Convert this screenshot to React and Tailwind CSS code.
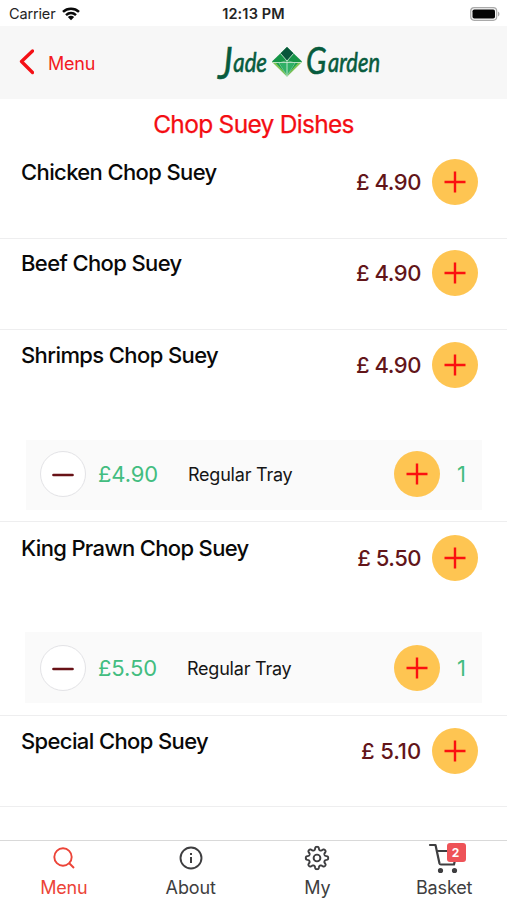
import React from 'react';

const dishes = [
  { name: 'Chicken Chop Suey', price: '4.90', height: 'h-[91px] pt-[11px]', tracking: 'tracking-[-0.62px]', priceTracking: 'tracking-[-0.45px]' },
  { name: 'Beef Chop Suey', price: '4.90', height: 'h-[91px] pt-[11px]', tracking: 'tracking-[-0.62px]', priceTracking: 'tracking-[-0.45px]' },
  { name: 'Shrimps Chop Suey', price: '4.90', height: 'h-[192px] pt-3', tracking: 'tracking-[-0.6px]', priceTracking: 'tracking-[-0.45px]', tray: { name: 'Regular Tray', qty: 1, box: 'mt-[52px] ml-[26px] h-[70px] pb-0.5 pl-[14px]' } },
  { name: 'King Prawn Chop Suey', price: '5.50', height: 'h-[194px] pt-[13px]', tracking: 'tracking-[-0.66px]', priceTracking: 'tracking-[-0.5px]', tray: { name: 'Regular Tray', qty: 1, box: 'mt-[51px] ml-[25px] h-[71px] pt-px pl-[15px]', label: '-ml-px' } },
  { name: 'Special Chop Suey', price: '5.10', height: 'h-[91px] pt-3', tracking: 'tracking-[-0.62px]', priceTracking: 'tracking-[-0.1px]' },
];

const Logo = () => (
  <svg width="176" height="64" viewBox="0 -10 176 64" fill="#075b3d" className="overflow-visible italic">
    <g fontFamily="Lato, sans-serif" fontSize="27" stroke="#075b3d" strokeWidth="0.6">
      <text x="8" y="38" textLength="49" lengthAdjust="spacingAndGlyphs"><tspan fontSize="44">J</tspan><tspan dx="1" dy="-7">ade</tspan></text>
      <text x="96" y="33" textLength="74" lengthAdjust="spacingAndGlyphs"><tspan fontSize="37">G</tspan><tspan dx="2" dy="-2">arden</tspan></text>
    </g>
    <path d="M77 6L62 20.500L77 35.500L92 20.500Z" fill="#159447" />
    <path d="M62 21L77 35.500L92 21L84 22L77 35L70 22Z" fill="#80c455" />
    <path d="M66 22H88L77 34Z" fill="#18a052" />
    <path d="M70 22H84L77 35Z" fill="#2fb066" />
    <path d="M70.500 12.500L77 6L83.500 12.500L77 20Z" fill="#08563b" />
    <path d="M70.500 12.500L77 20L83.500 12.500M63 21.500H91M77 20V35" fill="none" stroke="#d9f0df" strokeWidth="0.8" />
    <path d="M77 19.500L69 22L77 35L85 22Z" fill="none" stroke="#b9e3c4" strokeWidth="0.5" />
  </svg>
);

const AddButton = () => (
  <button className="flex h-[46px] w-[46px] shrink-0 items-center justify-center rounded-full bg-[#fec552]">
    <svg width="22" height="22" viewBox="0 0 22 22" stroke="#fb1010" strokeWidth="2.4">
      <path d="M11 0.500V21.500M0.500 11H21.500" />
    </svg>
  </button>
);

const TrayRow = ({ price, tray }) => (
  <div className={`mr-[25px] flex items-center bg-[#fafafa] ${tray.box}`}>
    <button className="flex h-[46px] w-[46px] shrink-0 items-center justify-center rounded-full border border-[#e3e3e6] bg-white">
      <svg width="22" height="6" viewBox="0 0 22 6" className="translate-y-px">
        <path d="M1.500 3H20.500" stroke="#681217" strokeWidth="2.7" strokeLinecap="round" />
      </svg>
    </button>
    <span className="ml-3 w-[90px] text-[22px] leading-7 tracking-[-0.1px] text-[#42bd80]">£{price}</span>
    <span className={`flex-1 pt-0.5 text-[18px] leading-6 tracking-[-0.22px] text-[#151515] ${tray.label ?? ''}`}>{tray.name}</span>
    <AddButton />
    <span className="w-[42px] pl-[17px] text-[22px] leading-7 text-[#42bd80]">{tray.qty}</span>
  </div>
);

const Dish = ({ dish }) => (
  <section className={`border-b border-[#eeeeef] ${dish.height}`}>
    <div className="flex justify-between pr-[29px] pl-[21px]">
      <h2 className={`text-[22px] leading-[27px] font-medium text-[#090909] ${dish.tracking}`}>{dish.name}</h2>
      <div className="flex items-center gap-[11px]">
        <span className={`text-[22px] leading-7 font-medium text-[#621519] ${dish.priceTracking}`}>£ {dish.price}</span>
        <AddButton />
      </div>
    </div>
    {dish.tray && <TrayRow price={dish.price} tray={dish.tray} />}
  </section>
);

const SearchIcon = () => (
  <svg width="22" height="22" viewBox="0 0 22 22" fill="none" stroke="currentColor" strokeWidth="1.900">
    <circle cx="10" cy="10" r="8.700" />
    <path d="M16 16L21 21" />
  </svg>
);

const InfoIcon = () => (
  <svg width="24" height="24" viewBox="0 0 24 24" fill="none" stroke="currentColor" strokeWidth="1.900">
    <circle cx="12" cy="12" r="10.500" />
    <path d="M12 11V17M12 7V9" strokeWidth="2" />
  </svg>
);

// eight rounded teeth around the rim
const gearPoints = Array.from({ length: 160 }, (_, i) => {
  const angle = (i / 160) * Math.PI * 2;
  const radius = 9.7 + 1.55 * Math.tanh(2 * Math.cos(8 * angle));
  return `${(13 + radius * Math.sin(angle)).toFixed(2)},${(13 - radius * Math.cos(angle)).toFixed(2)}`;
}).join(' ');

const GearIcon = () => (
  <svg width="26" height="26" viewBox="0 0 26 26" fill="none" stroke="currentColor" strokeWidth="1.900" strokeLinejoin="round">
    <polygon points={gearPoints} />
    <circle cx="13" cy="13" r="3.400" />
  </svg>
);

const CartIcon = () => (
  <svg width="32" height="32" viewBox="0 0 32 32" fill="none" stroke="currentColor" strokeWidth="2.200" strokeLinecap="round" strokeLinejoin="round">
    <path d="M2 3H7.500L11.500 21.500Q11.800 22.500 13 22.500H26L29 9H9" />
    <circle cx="12.500" cy="28.500" r="1.500" fill="currentColor" />
    <circle cx="26.500" cy="28.500" r="1.500" fill="currentColor" />
  </svg>
);

const Tab = ({ label, active, children }) => (
  <button className={`flex flex-1 flex-col items-center ${active ? 'text-[#ec4438]' : 'text-[#3e3e40]'}`}>
    <span className="relative flex h-[34px] items-center pl-px">{children}</span>
    <span className="mt-px pl-px text-[18px] leading-6 tracking-[-0.15px]">{label}</span>
  </button>
);

const App = () => (
  <div className="flex h-[900px] w-[507px] flex-col overflow-hidden bg-white font-['Inter',sans-serif]">
    <div className="grid h-[26px] shrink-0 grid-cols-3 items-center px-[9px] pt-px text-[14.5px] leading-5 text-[#242424]">
      <div className="flex items-center gap-[7px]">
        <span className="tracking-[-0.15px]">Carrier</span>
        <svg width="18" height="14" viewBox="0 0 18 14" fill="none" stroke="#090909" strokeWidth="2.500">
          <path d="M1 4.800C5.500 0.600 12.500 0.600 17 4.800M4 8.100C7 5.400 11 5.400 14 8.100" />
          <path d="M5.800 10C7.800 8.300 10.200 8.300 12.200 10L9 13.200Z" fill="#090909" stroke="none" />
        </svg>
      </div>
      <span className="text-center font-semibold tracking-[0.15px] whitespace-nowrap">12:13 PM</span>
      <svg width="30" height="14" viewBox="0 0 30 14" className="-mr-[2px] justify-self-end">
        <rect x="0.700" y="0.700" width="26" height="12.600" rx="3.500" fill="#f7f7f7" stroke="#aaa" strokeWidth="1.200" />
        <rect x="2.500" y="2.500" width="22.500" height="9" rx="1.800" fill="#050505" />
        <path d="M28 4.500C30 5.500 30 8.500 28 9.500Z" fill="#aaa" />
      </svg>
    </div>

    <header className="flex h-[73px] shrink-0 items-center bg-[#f7f7f7] pl-[19px] text-[#f31b22]">
      <button className="flex w-[191px] items-center gap-[14px]">
        <svg width="15" height="26" viewBox="0 0 15 26" fill="none" stroke="#f41016" strokeWidth="3.300" strokeLinecap="round" strokeLinejoin="round" className="-translate-y-px">
          <path d="M13.500 2L2.500 12.500L13.500 23.500" />
        </svg>
        <span className="pt-[3px] text-[18px] leading-6 tracking-[-0.25px]">Menu</span>
      </button>
      <Logo />
    </header>

    <main className="flex-1">
      <h1 className="h-[49px] pt-[9px] text-center text-[24.5px] leading-8 tracking-[-0.7px] text-[#f40d13] [-webkit-text-stroke:0.25px_#f40d13]">Chop Suey Dishes</h1>
      {dishes.map((dish) => (
        <Dish key={dish.name} dish={dish} />
      ))}
    </main>

    <nav className="flex h-[60px] shrink-0 border-t border-[#d9d9d9]">
      <Tab label="Menu" active><SearchIcon /></Tab>
      <Tab label="About"><InfoIcon /></Tab>
      <Tab label="My"><GearIcon /></Tab>
      <Tab label="Basket">
        <CartIcon />
        <span className="absolute top-0.5 left-5 flex h-[19px] w-[19px] items-center justify-center rounded-[3px] bg-[#ee5358] pr-0.5 text-[12px] leading-none font-bold text-white">2</span>
      </Tab>
    </nav>
  </div>
);

export default App;
